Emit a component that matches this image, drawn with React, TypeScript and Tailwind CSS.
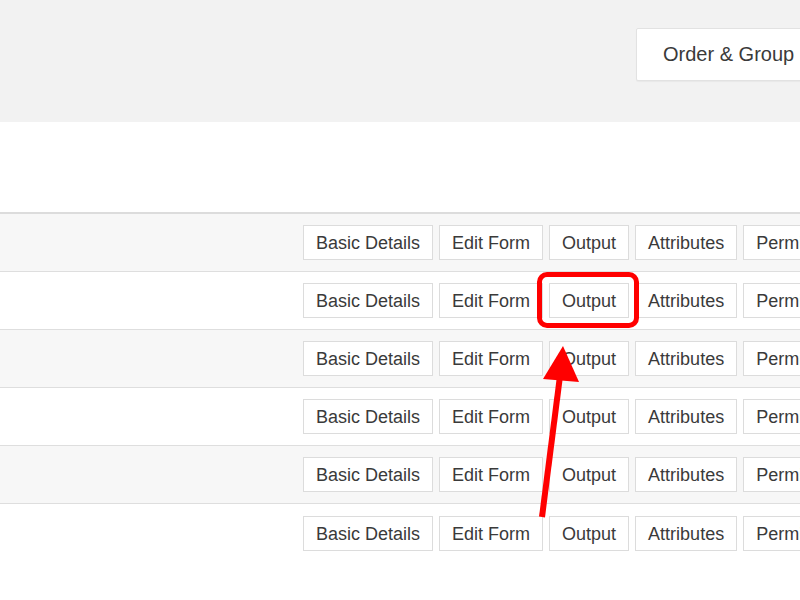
const actions = ["Basic Details", "Edit Form", "Output", "Attributes", "Permissions"];

const rows = [0, 1, 2, 3, 4, 5];

const ActionButton = ({ label }: { label: string }) => (
  <button className="shrink-0 whitespace-nowrap border border-[#dcdcdc] bg-white px-3 pt-[6px] pb-[4px] text-[18px] leading-[23px] text-[#3a3a3a]">
    {label}
  </button>
);

const App = () => {
  return (
    <div
      className="relative h-[600px] w-[800px] overflow-hidden bg-white"
      style={{ fontFamily: '"Liberation Sans", Arial, sans-serif' }}
    >
      {/* Toolbar band */}
      <div className="flex h-[122px] items-start bg-[#f2f2f2] pl-[636px] pt-[28px]">
        <button className="h-[53px] shrink-0 whitespace-nowrap rounded-[2px] border border-[#e2e2e2] bg-white pb-[2px] pl-[26px] pr-[30px] text-[20px] text-[#3a3a3a] shadow-[0_1px_1px_rgba(0,0,0,0.04)]">
          Order &amp; Group
        </button>
      </div>

      {/* List table */}
      <div className="mt-[90px] border-t-2 border-[#dcdcdc]">
        {rows.map((r) => (
          <div
            key={r}
            className={`flex h-[58px] items-center pl-[303px] ${
              r % 2 === 0 ? "bg-[#f7f7f7]" : "bg-white"
            } ${r < rows.length - 1 ? "border-b border-[#dedede]" : ""}`}
          >
            <div className="flex gap-[6px]">
              {actions.map((a) => (
                <ActionButton key={a} label={a} />
              ))}
            </div>
          </div>
        ))}
      </div>

      {/* Highlight ring around the second row's Output button */}
      <div className="absolute left-[537px] top-[272px] h-[56px] w-[102px] rounded-[10px] border-[5px] border-[#ff0000]" />

      {/* Pointer arrow */}
      <svg className="absolute left-0 top-0" width="800" height="600" viewBox="0 0 800 600">
        <line x1="542" y1="517" x2="560" y2="376" stroke="#ff0000" strokeWidth="6" />
        <polygon points="563,346 579,382 543,379" fill="#ff0000" />
      </svg>
    </div>
  );
};

export default App;
